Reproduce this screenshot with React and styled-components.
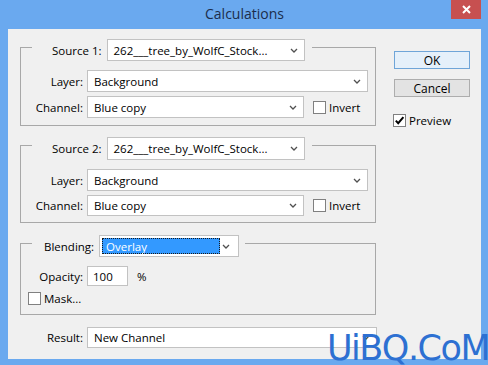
import React from 'react';
import styled, { createGlobalStyle } from 'styled-components';

const GlobalStyle = createGlobalStyle`
  html, body {
    margin: 0;
    padding: 0;
  }
  body {
    font-family: "Open Sans", "Noto Sans", sans-serif;
    font-size: 11.5px;
    color: #000;
  }
  * {
    box-sizing: border-box;
  }
`;

const Chevron = () => (
  <svg width="8" height="5" viewBox="0 0 8 5">
    <path d="M1 1 L4 4 L7 1" fill="none" stroke="#505050" strokeWidth="1.3" />
  </svg>
);

const Select = ({ width, height, focused, children }) => (
  <SelectBox $width={width} $height={height} $focused={focused}>
    <span className="value">{children}</span>
    <span className="arrow">
      <Chevron />
    </span>
  </SelectBox>
);

const Checkbox = ({ checked }) => (
  <CheckBox>
    {checked && (
      <svg width="11" height="11" viewBox="0 0 11 11">
        <path d="M1.8 5.6 L4.2 8.2 L9.4 2.2" fill="none" stroke="#000" strokeWidth="2" />
      </svg>
    )}
  </CheckBox>
);

const App = () => {
  return (
    <>
      <GlobalStyle />
      <Window>
        <TitleBar>
          <span />
          <Title>Calculations</Title>
          <CloseButton>
            <svg width="9" height="9" viewBox="0 0 9 9">
              <path d="M1 1 L8 8 M8 1 L1 8" stroke="#fff" strokeWidth="2" />
            </svg>
          </CloseButton>
        </TitleBar>
        <Body>
          <LeftColumn>
            <Group $top={18}>
              <Header $left={20} $right={7}>
                <span>Source 1:</span>
                <Select width={198}>262___tree_by_WolfC_Stock...</Select>
              </Header>
              <FieldRow $top={9}>
                <Label>Layer:</Label>
                <Select width={281}>Background</Select>
              </FieldRow>
              <FieldRow $top={4}>
                <Label>Channel:</Label>
                <Select width={217}>Blue copy</Select>
                <CheckLine $left={5}>
                  <Checkbox />
                  <span>Invert</span>
                </CheckLine>
              </FieldRow>
            </Group>

            <Group $top={19} $bottom={6}>
              <Header $left={20} $right={7}>
                <span>Source 2:</span>
                <Select width={198} height={23}>262___tree_by_WolfC_Stock...</Select>
              </Header>
              <FieldRow $top={9}>
                <Label>Layer:</Label>
                <Select width={281}>Background</Select>
              </FieldRow>
              <FieldRow $top={4}>
                <Label>Channel:</Label>
                <Select width={217} height={21}>Blue copy</Select>
                <CheckLine $left={5}>
                  <Checkbox />
                  <span>Invert</span>
                </CheckLine>
              </FieldRow>
            </Group>

            <Group $top={20} $bottom={8}>
              <Header $left={12} $right={6}>
                <span>Blending:</span>
                <Select width={140} focused>
                  Overlay
                </Select>
              </Header>
              <FieldRow $top={9}>
                <Label>Opacity:</Label>
                <TextInput>100</TextInput>
                <Percent>%</Percent>
              </FieldRow>
              <CheckLine $left={7} $top={5}>
                <Checkbox />
                <span>Mask...</span>
              </CheckLine>
            </Group>

            <FieldRow $top={12} $indent={1}>
              <Label>Result:</Label>
              <Select width={290} height={21}>
                New Channel
              </Select>
            </FieldRow>
          </LeftColumn>

          <RightColumn>
            <Button $primary>OK</Button>
            <Button>Cancel</Button>
            <CheckLine $top={6} $left={-1}>
              <Checkbox checked />
              <span>Preview</span>
            </CheckLine>
          </RightColumn>
        </Body>
        <Watermark>UiBQ.CoM</Watermark>
      </Window>
    </>
  );
};

const Window = styled.div`
  position: relative;
  width: 488px;
  height: 365px;
  overflow: hidden;
  background: #6aa9ef;
  padding: 0 7px 6px 8px;
  display: flex;
  flex-direction: column;
`;

const TitleBar = styled.div`
  height: 29px;
  flex: none;
  display: grid;
  grid-template-columns: 1fr auto 1fr;
`;

const Title = styled.div`
  font-size: 14px;
  line-height: 27px;
  color: #1b2d4b;
`;

const CloseButton = styled.div`
  justify-self: end;
  width: 30px;
  height: 19px;
  background: #c75050;
  display: flex;
  align-items: center;
  justify-content: center;
`;

const Body = styled.div`
  flex: 1;
  background: #f0f0f0;
  display: flex;
  padding-left: 12px;
`;

const LeftColumn = styled.div`
  width: 356px;
  display: flex;
  flex-direction: column;
`;

const RightColumn = styled.div`
  margin-left: 18px;
  padding-top: 22px;
  display: flex;
  flex-direction: column;
  gap: 10px;
`;

const Group = styled.div`
  margin-top: ${p => p.$top}px;
  border: 1px solid #a8a8a8;
  padding-bottom: ${p => p.$bottom ?? 7}px;
  display: flex;
  flex-direction: column;
  align-items: flex-start;
`;

const Header = styled.div`
  margin: -9px 0 0 11px;
  padding: 0 ${p => p.$right}px 0 ${p => p.$left}px;
  background: #f0f0f0;
  display: flex;
  align-items: center;
  gap: 5px;
  white-space: nowrap;
`;

const FieldRow = styled.div`
  margin-top: ${p => p.$top}px;
  padding-left: ${p => p.$indent ?? 0}px;
  display: grid;
  grid-template-columns: 62px auto auto;
  column-gap: 4px;
  align-items: center;
`;

const Label = styled.span`
  text-align: right;
  white-space: nowrap;
`;

const SelectBox = styled.div`
  width: ${p => p.$width}px;
  height: ${p => p.$height ?? 22}px;
  background: #fff;
  border: 1px solid #c2c2c2;
  display: flex;
  align-items: center;
  padding: ${p => (p.$focused ? '2px' : '0 0 0 6px')};
  white-space: nowrap;

  .value {
    flex: ${p => (p.$focused ? '0 0 118px' : '1')};
    align-self: stretch;
    display: flex;
    align-items: center;
    padding-left: ${p => (p.$focused ? '4px' : '0')};
    background: ${p => (p.$focused ? '#3399ff' : 'transparent')};
    color: ${p => (p.$focused ? '#fff' : '#000')};
    outline: ${p => (p.$focused ? '1px dotted #1a1a1a' : 'none')};
    outline-offset: -1px;
  }

  .arrow {
    margin-left: auto;
    margin-right: 6px;
    display: flex;
  }
`;

const CheckLine = styled.div`
  margin-top: ${p => p.$top ?? 0}px;
  margin-left: ${p => p.$left ?? 0}px;
  display: flex;
  align-items: center;
  gap: 3px;
  white-space: nowrap;
`;

const CheckBox = styled.span`
  width: 13px;
  height: 13px;
  flex: none;
  background: #fff;
  border: 1px solid #808080;
  display: flex;
  align-items: center;
  justify-content: center;
`;

const TextInput = styled.div`
  width: 41px;
  height: 20px;
  background: #fff;
  border: 1px solid #c2c2c2;
  padding-left: 5px;
  display: flex;
  align-items: center;
`;

const Percent = styled.span`
  margin-left: 5px;
`;

const Button = styled.div`
  width: 76px;
  height: 18px;
  display: flex;
  align-items: center;
  justify-content: center;
  font-size: 12px;
  background: ${p => (p.$primary ? '#e5f0fa' : '#e3e3e3')};
  border: 1px solid ${p => (p.$primary ? '#6fa5d8' : '#adadad')};
`;

const Watermark = styled.div`
  position: absolute;
  left: 327px;
  top: 331px;
  font-family: "DejaVu Sans", sans-serif;
  font-size: 35px;
  line-height: 35px;
  letter-spacing: -1.5px;
  color: #2d70d2;
  white-space: nowrap;
`;

export default App;
